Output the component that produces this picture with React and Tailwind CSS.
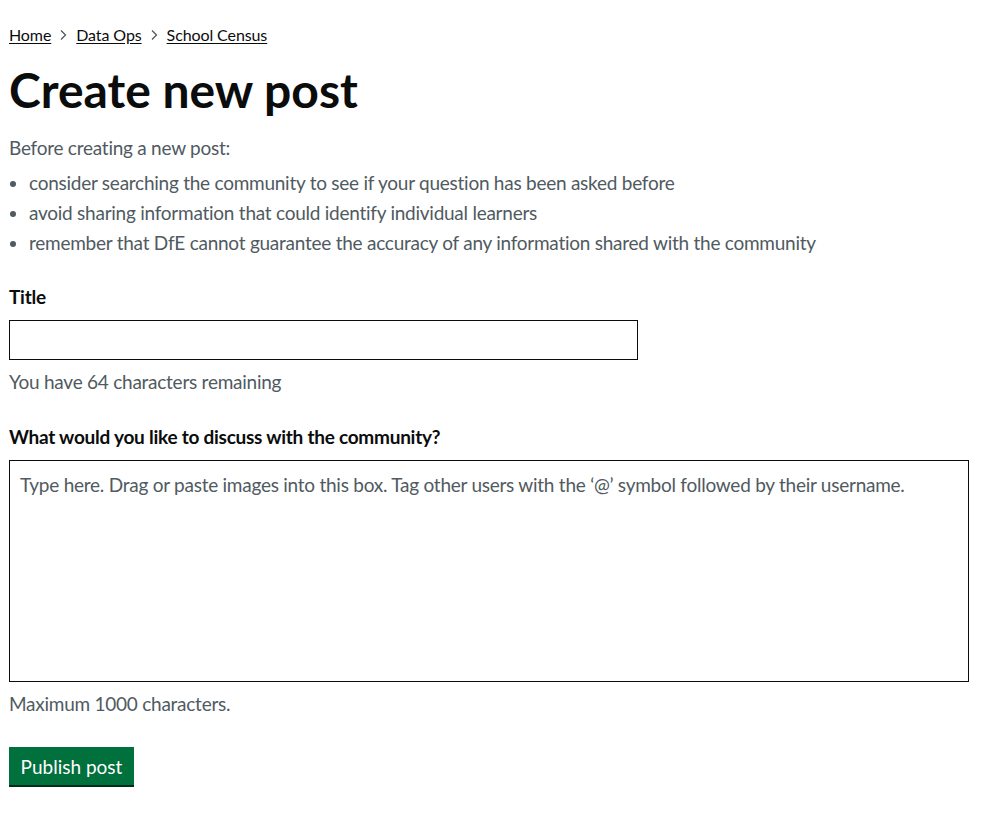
import { useState } from 'react'

function Chevron() {
  return (
    <svg width="7" height="12" viewBox="0 0 7 12" className="mx-[9px] shrink-0" aria-hidden="true">
      <path d="M1 1.5 L5.5 6 L1 10.5" fill="none" stroke="#505a5f" strokeWidth="1.3" />
    </svg>
  )
}

export default function App() {
  const [title, setTitle] = useState('')
  const [body, setBody] = useState('')

  return (
    <div className="min-h-screen bg-white px-[9px] pt-[25px] font-['Lato',sans-serif] text-[#0b0c0c]">
      <nav className="flex items-center text-[16px] leading-[20px] tracking-[-0.1px]">
        <a href="#" className="underline underline-offset-2">Home</a>
        <Chevron />
        <a href="#" className="underline underline-offset-2">Data Ops</a>
        <Chevron />
        <a href="#" className="underline underline-offset-2">School Census</a>
      </nav>

      <h1 className="mt-[20px] text-[48px] font-bold leading-[50px]">Create new post</h1>

      <div className="tracking-[-0.25px]">
        <p className="mt-[20px] text-[19px] leading-[25px] text-[#505a5f]">Before creating a new post:</p>
        <ul className="mt-[10px] list-disc pl-[20px] text-[19px] leading-[25px] text-[#505a5f]">
          <li className="mb-[5px]">consider searching the community to see if your question has been asked before</li>
          <li className="mb-[5px]">avoid sharing information that could identify individual learners</li>
          <li className="mb-[5px]">remember that DfE cannot guarantee the accuracy of any information shared with the community</li>
        </ul>

        <label className="mt-[29px] block text-[19px] font-bold leading-[25px]">Title</label>
        <input
          value={title}
          onChange={(e) => setTitle(e.target.value)}
          maxLength={64}
          className="mt-[11px] block h-[40px] w-[629px] border border-[#0b0c0c] px-[8px] text-[19px] outline-none"
        />
        <p className="mt-[9px] text-[19px] leading-[25px] text-[#505a5f]">You have {64 - title.length} characters remaining</p>

        <label className="mt-[30px] block text-[19px] font-bold leading-[25px]">What would you like to discuss with the community?</label>
        <textarea
          value={body}
          onChange={(e) => setBody(e.target.value)}
          placeholder="Type here. Drag or paste images into this box. Tag other users with the ‘@’ symbol followed by their username."
          className="mt-[11px] block h-[222px] w-[960px] resize-none border border-[#0b0c0c] px-[10px] py-[11px] text-[19px] leading-[25px] tracking-[-0.25px] outline-none placeholder:text-[#505a5f]"
        />
        <p className="mt-[9px] text-[19px] leading-[25px] text-[#505a5f]">Maximum 1000 characters.</p>

        <button className="mt-[31px] h-[38px] w-[125px] bg-[#00703c] text-[19px] leading-[25px] tracking-normal text-white shadow-[0_2px_0_#002d18]">
          Publish post
        </button>
      </div>
    </div>
  )
}
